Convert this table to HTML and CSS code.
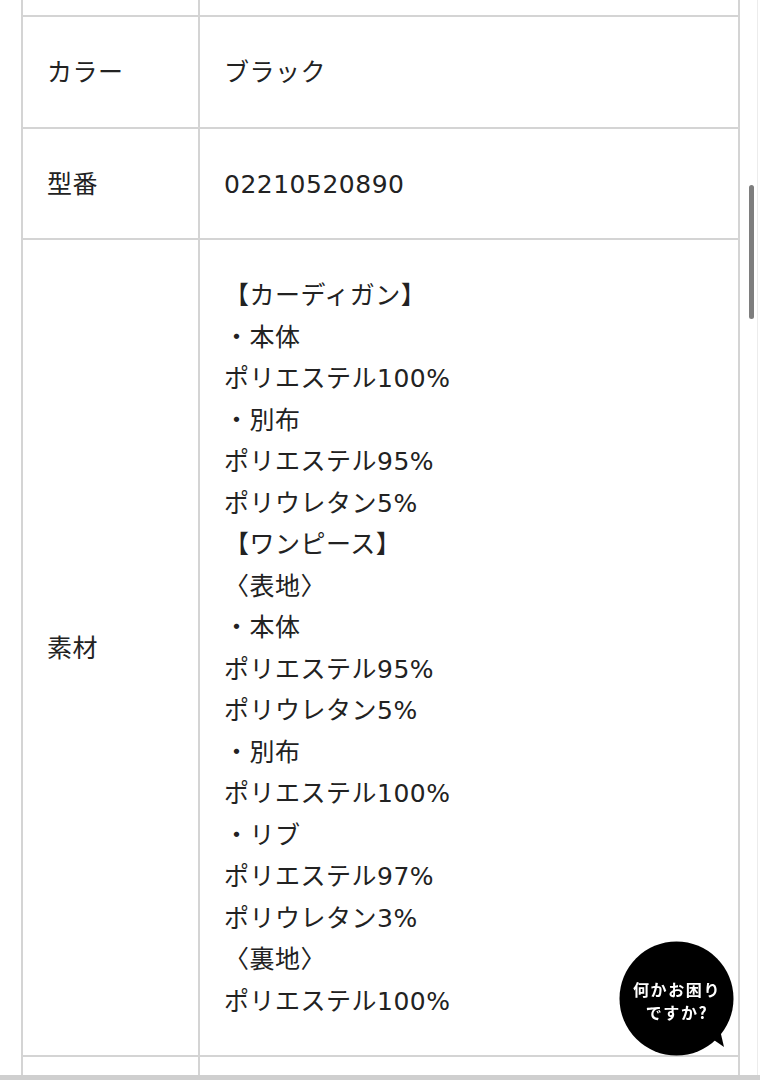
FILE: index.html
```html
<!DOCTYPE html>
<html lang="ja">
<head>
<meta charset="utf-8">
<link rel="stylesheet" href="styles.css">
</head>
<body>
<div class="page">
  <table class="spec">
    <colgroup><col class="col-label"><col class="col-value"></colgroup>
    <tr class="cut-top"><td class="label"></td><td class="value"></td></tr>
    <tr><td class="label">カラー</td><td class="value">ブラック</td></tr>
    <tr><td class="label">型番</td><td class="value">02210520890</td></tr>
    <tr><td class="label">素材</td><td class="value">【カーディガン】<br>・本体<br>ポリエステル100%<br>・別布<br>ポリエステル95%<br>ポリウレタン5%<br>【ワンピース】<br>〈表地〉<br>・本体<br>ポリエステル95%<br>ポリウレタン5%<br>・別布<br>ポリエステル100%<br>・リブ<br>ポリエステル97%<br>ポリウレタン3%<br>〈裏地〉<br>ポリエステル100%</td></tr>
    <tr class="cut-bottom"><td class="label"></td><td class="value"></td></tr>
  </table>
</div>
<div class="scroll-line"></div>
<div class="scroll-thumb"></div>
<div class="bottom-bar"></div>
<a class="help" href="#">
  <svg class="help-bg" width="120" height="120" viewBox="0 0 120 120">
    <circle cx="59.5" cy="58.5" r="57" fill="#000"/>
    <path d="M94 98 L107 107 L103 90 Z" fill="#000"/>
  </svg>
  <span class="help-text">何かお困り<br>ですか?</span>
</a>
</body>
</html>
```
FILE: styles.css
```css
html, body {
  margin: 0;
  padding: 0;
  background: #fff;
  overflow: hidden;
}
.page {
  padding-left: 21px;
  width: 719px;
  height: 1080px;
  overflow: hidden;
}
.spec {
  width: 719px;
  border-collapse: collapse;
  table-layout: fixed;
  font-family: "DejaVu Sans", "Noto Sans CJK JP", sans-serif;
  font-size: 25px;
  font-weight: 400;
  line-height: 41.5px;
  letter-spacing: 0.5px;
  color: #222;
}
.col-label {
  width: 177px;
}
.spec td {
  border: 2px solid #d4d4d4;
  padding: 35px 24px 33px;
  vertical-align: middle;
}
.spec tr.cut-top td {
  border-top: none;
  height: 15px;
  padding: 0;
}
.spec tr.cut-bottom td {
  border-bottom: none;
  height: 40px;
  padding: 0;
}
.scroll-line {
  position: fixed;
  left: 757px;
  top: 0;
  width: 1px;
  height: 1080px;
  background: #ececec;
}
.scroll-thumb {
  position: fixed;
  left: 749px;
  top: 185px;
  width: 5px;
  height: 134px;
  border-radius: 3px;
  background: #7e7e7e;
}
.bottom-bar {
  position: fixed;
  left: 0;
  top: 1075px;
  width: 760px;
  height: 5px;
  background: #cfcfcf;
}
.help {
  position: fixed;
  left: 617px;
  top: 940px;
  width: 120px;
  height: 120px;
  text-decoration: none;
}
.help-bg {
  position: absolute;
  left: 0;
  top: 0;
}
.help-text {
  position: absolute;
  left: 0;
  top: 38px;
  width: 120px;
  text-align: center;
  color: #fff;
  font-family: "Noto Sans CJK JP", sans-serif;
  font-weight: 700;
  font-size: 16px;
  line-height: 23px;
  letter-spacing: 1.6px;
}
```
